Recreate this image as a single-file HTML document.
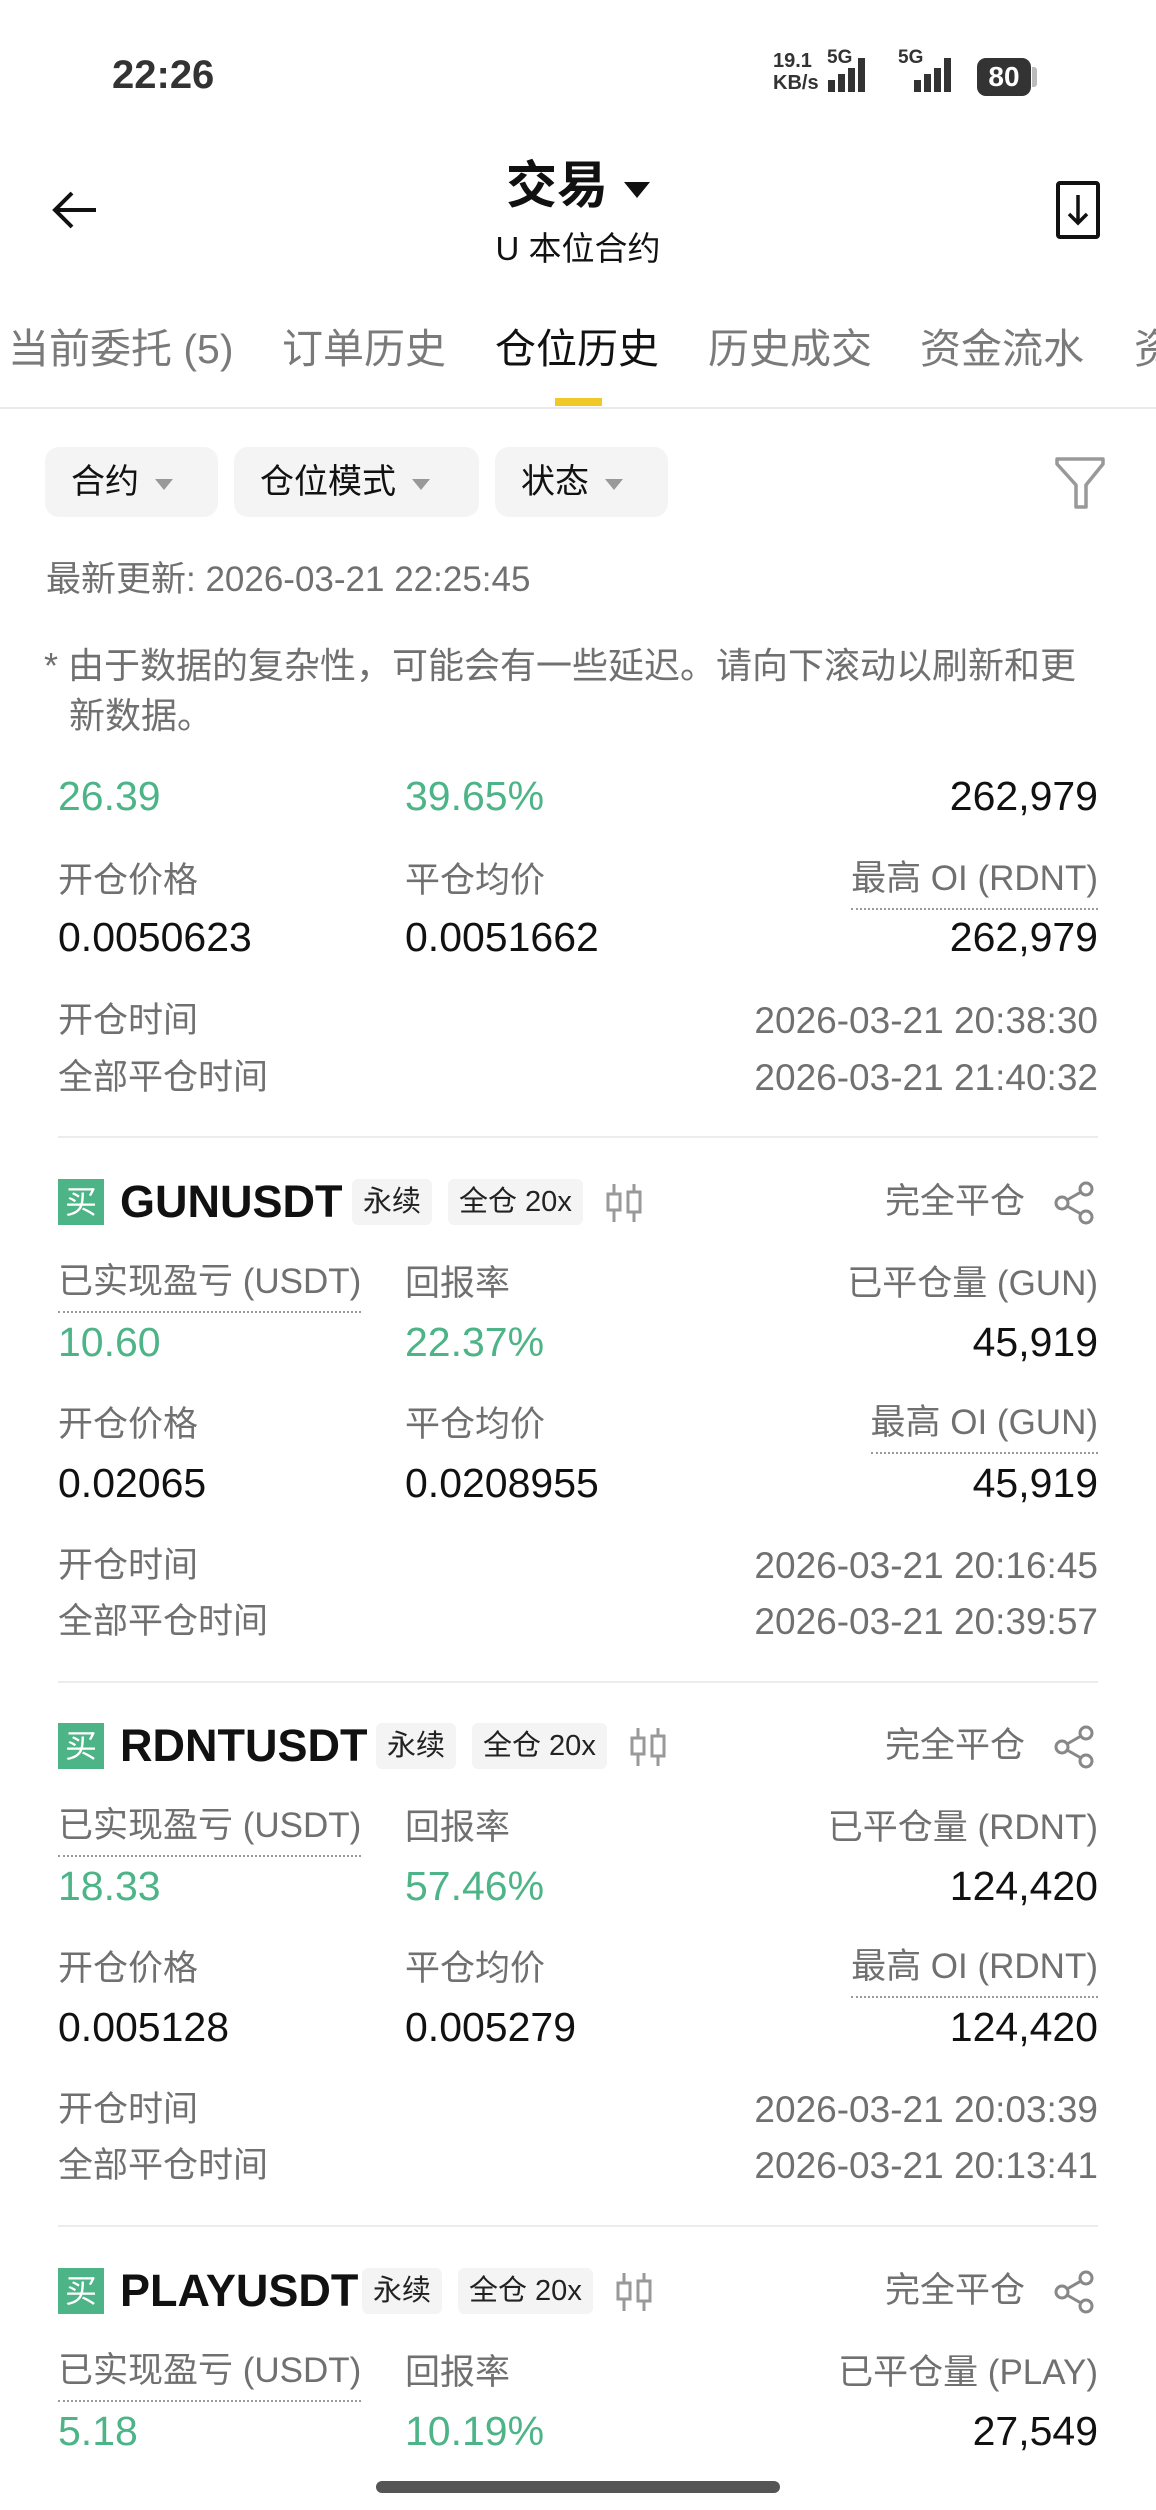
<!DOCTYPE html>
<html><head><meta charset="utf-8">
<style>
*{margin:0;padding:0;box-sizing:border-box}
body{width:1156px;height:2510px;background:#fff;position:relative;overflow:hidden;font-family:"Liberation Sans","Noto Sans CJK SC",sans-serif;color:#111}
.a{position:absolute;white-space:nowrap;line-height:50px;height:50px}
.lbl{font-size:35px;color:#707070}
.tm{font-size:37px;color:#707070}
.val{font-size:41px;color:#111}
.g{color:#4db487}
.r{right:58px;text-align:right}
.dot{border-bottom:2px dotted #9a9a9a;line-height:46px;height:54px}
.sep{position:absolute;left:58px;right:58px;height:2px;background:#ececec}
.tag{position:absolute;height:46px;line-height:46px;background:#f4f4f4;border-radius:6px;font-size:29px;color:#222;padding:0 11px}
.buy{position:absolute;width:46px;height:46px;background:#4db487;color:#fff;font-size:32px;line-height:46px;text-align:center}
.sym{position:absolute;font-size:45px;font-weight:bold;line-height:50px;color:#111}
.chip{position:absolute;top:447px;height:70px;background:#f4f4f4;border-radius:14px;font-size:34px;line-height:70px;padding-left:26px;color:#111}
.chip i{display:inline-block;width:0;height:0;border-left:9px solid transparent;border-right:9px solid transparent;border-top:11px solid #999;margin-left:16px;vertical-align:middle}
.tab{font-size:41px;color:#7a7a7a;top:323px;height:52px;line-height:52px}
</style></head><body>

<!-- status bar -->
<div class="a" style="left:112px;top:50px;font-size:40px;font-weight:bold;color:#333">22:26</div>
<div class="a" style="left:773px;top:50px;font-size:20px;font-weight:bold;line-height:22px;color:#333">19.1<br>KB/s</div>
<div class="a" style="left:827px;top:48px;font-size:19px;font-weight:bold;line-height:20px;color:#333">5G</div>
<svg style="position:absolute;left:826px;top:56px" width="62" height="40"><rect x="2" y="24" width="7" height="12" fill="#333"/><rect x="12" y="18" width="7" height="18" fill="#333"/><rect x="22" y="12" width="7" height="24" fill="#333"/><rect x="32" y="2" width="7" height="34" fill="#333"/></svg>
<div class="a" style="left:898px;top:48px;font-size:19px;font-weight:bold;line-height:20px;color:#333">5G</div>
<svg style="position:absolute;left:912px;top:56px" width="50" height="40"><rect x="2" y="24" width="7" height="12" fill="#333"/><rect x="12" y="18" width="7" height="18" fill="#333"/><rect x="22" y="12" width="7" height="24" fill="#333"/><rect x="32" y="2" width="7" height="34" fill="#333"/></svg>
<div style="position:absolute;left:977px;top:58px;width:54px;height:38px;background:#333;border-radius:9px;color:#fff;font-size:28px;font-weight:bold;text-align:center;line-height:38px">80</div>
<div style="position:absolute;left:1032px;top:67px;width:5px;height:20px;background:#bbb;border-radius:0 3px 3px 0"></div>

<!-- header -->
<svg style="position:absolute;left:50px;top:188px" width="50" height="44" viewBox="0 0 50 44"><path d="M46 22H6M22 5L5 22l17 17" fill="none" stroke="#111" stroke-width="4"/></svg>
<div class="a" style="left:0;width:1156px;text-align:center;top:154px;height:64px;line-height:64px;font-size:51px;font-weight:bold">交易<span style="display:inline-block;width:0;height:0;border-left:13px solid transparent;border-right:13px solid transparent;border-top:16px solid #111;margin-left:16px;vertical-align:middle"></span></div>
<div class="a" style="left:0;width:1156px;text-align:center;top:224px;font-size:33px;color:#111">U 本位合约</div>
<svg style="position:absolute;left:1055px;top:180px" width="50" height="62" viewBox="0 0 50 62"><rect x="3" y="3" width="40" height="54" rx="2" fill="none" stroke="#111" stroke-width="4"/><path d="M23 15v28M14 34l9 9 9-9" fill="none" stroke="#111" stroke-width="3.5"/></svg>

<!-- tabs -->
<div class="a tab" style="left:8px">当前委托 (5)</div>
<div class="a tab" style="left:282px">订单历史</div>
<div class="a tab" style="left:495px;color:#111">仓位历史</div>
<div class="a tab" style="left:708px">历史成交</div>
<div class="a tab" style="left:920px">资金流水</div>
<div class="a tab" style="left:1134px">资</div>
<div style="position:absolute;left:555px;top:398px;width:47px;height:8px;background:#f0c929"></div>
<div style="position:absolute;left:0;right:0;top:407px;height:2px;background:#eaeaea"></div>

<!-- chips -->
<div class="chip" style="left:45px;width:173px">合约<i></i></div>
<div class="chip" style="left:234px;width:245px">仓位模式<i></i></div>
<div class="chip" style="left:495px;width:173px">状态<i></i></div>
<svg style="position:absolute;left:1053px;top:455px" width="54" height="56" viewBox="0 0 54 56"><path d="M4 4h46v5L33 30v22h-10V30L4 9z" fill="none" stroke="#999" stroke-width="3.5" stroke-linejoin="round"/></svg>

<div class="a" style="left:46px;top:555px;font-size:35px;color:#707070">最新更新: 2026-03-21 22:25:45</div>
<div class="a" style="left:44px;top:641px;font-size:36px;color:#707070">* 由于数据的复杂性，可能会有一些延迟。请向下滚动以刷新和更</div>
<div class="a" style="left:69px;top:691px;font-size:36px;color:#707070">新数据。</div>

<!-- partial card -->
<div class="a val g" style="left:58px;top:771px">26.39</div>
<div class="a val g" style="left:405px;top:771px">39.65%</div>
<div class="a val r" style="top:771px">262,979</div>
<div class="a lbl" style="left:58px;top:856px">开仓价格</div>
<div class="a lbl" style="left:405px;top:856px">平仓均价</div>
<div class="a lbl r dot" style="top:856px">最高 OI (RDNT)</div>
<div class="a val" style="left:58px;top:912px">0.0050623</div>
<div class="a val" style="left:405px;top:912px">0.0051662</div>
<div class="a val r" style="top:912px">262,979</div>
<div class="a lbl" style="left:58px;top:996px">开仓时间</div>
<div class="a tm r" style="top:996px">2026-03-21 20:38:30</div>
<div class="a lbl" style="left:58px;top:1053px">全部平仓时间</div>
<div class="a tm r" style="top:1053px">2026-03-21 21:40:32</div>
<div class="sep" style="top:1136px"></div>

<!-- GUN card -->
<div class="buy" style="left:58px;top:1179px">买</div>
<div class="sym" style="left:120px;top:1177px">GUNUSDT</div>
<div class="tag" style="left:352px;top:1179px">永续</div>
<div class="tag" style="left:448px;top:1179px">全仓 20x</div>
<svg style="position:absolute;left:604px;top:1182px" width="40" height="42" viewBox="0 0 40 42"><path d="M10 2v38M30 2v38" stroke="#999" stroke-width="3"/><rect x="4" y="12" width="12" height="16" fill="#fff" stroke="#999" stroke-width="3"/><rect x="24" y="10" width="12" height="20" fill="#fff" stroke="#999" stroke-width="3"/></svg>
<div class="a lbl" style="left:885px;top:1177px">完全平仓</div>
<svg style="position:absolute;left:1053px;top:1181px" width="44" height="44" viewBox="0 0 44 44"><circle cx="33" cy="8" r="6" fill="none" stroke="#888" stroke-width="3"/><circle cx="9" cy="22" r="6" fill="none" stroke="#888" stroke-width="3"/><circle cx="33" cy="36" r="6" fill="none" stroke="#888" stroke-width="3"/><path d="M14 19l14-8M14 25l14 8" stroke="#888" stroke-width="3"/></svg>
<div class="a lbl dot" style="left:58px;top:1259px">已实现盈亏 (USDT)</div>
<div class="a lbl" style="left:405px;top:1259px">回报率</div>
<div class="a lbl r" style="top:1259px">已平仓量 (GUN)</div>
<div class="a val g" style="left:58px;top:1317px">10.60</div>
<div class="a val g" style="left:405px;top:1317px">22.37%</div>
<div class="a val r" style="top:1317px">45,919</div>
<div class="a lbl" style="left:58px;top:1400px">开仓价格</div>
<div class="a lbl" style="left:405px;top:1400px">平仓均价</div>
<div class="a lbl r dot" style="top:1400px">最高 OI (GUN)</div>
<div class="a val" style="left:58px;top:1458px">0.02065</div>
<div class="a val" style="left:405px;top:1458px">0.0208955</div>
<div class="a val r" style="top:1458px">45,919</div>
<div class="a lbl" style="left:58px;top:1541px">开仓时间</div>
<div class="a tm r" style="top:1541px">2026-03-21 20:16:45</div>
<div class="a lbl" style="left:58px;top:1597px">全部平仓时间</div>
<div class="a tm r" style="top:1597px">2026-03-21 20:39:57</div>
<div class="sep" style="top:1681px"></div>

<!-- RDNT card -->
<div class="buy" style="left:58px;top:1723px">买</div>
<div class="sym" style="left:120px;top:1721px">RDNTUSDT</div>
<div class="tag" style="left:376px;top:1723px">永续</div>
<div class="tag" style="left:472px;top:1723px">全仓 20x</div>
<svg style="position:absolute;left:628px;top:1726px" width="40" height="42" viewBox="0 0 40 42"><path d="M10 2v38M30 2v38" stroke="#999" stroke-width="3"/><rect x="4" y="12" width="12" height="16" fill="#fff" stroke="#999" stroke-width="3"/><rect x="24" y="10" width="12" height="20" fill="#fff" stroke="#999" stroke-width="3"/></svg>
<div class="a lbl" style="left:885px;top:1721px">完全平仓</div>
<svg style="position:absolute;left:1053px;top:1725px" width="44" height="44" viewBox="0 0 44 44"><circle cx="33" cy="8" r="6" fill="none" stroke="#888" stroke-width="3"/><circle cx="9" cy="22" r="6" fill="none" stroke="#888" stroke-width="3"/><circle cx="33" cy="36" r="6" fill="none" stroke="#888" stroke-width="3"/><path d="M14 19l14-8M14 25l14 8" stroke="#888" stroke-width="3"/></svg>
<div class="a lbl dot" style="left:58px;top:1803px">已实现盈亏 (USDT)</div>
<div class="a lbl" style="left:405px;top:1803px">回报率</div>
<div class="a lbl r" style="top:1803px">已平仓量 (RDNT)</div>
<div class="a val g" style="left:58px;top:1861px">18.33</div>
<div class="a val g" style="left:405px;top:1861px">57.46%</div>
<div class="a val r" style="top:1861px">124,420</div>
<div class="a lbl" style="left:58px;top:1944px">开仓价格</div>
<div class="a lbl" style="left:405px;top:1944px">平仓均价</div>
<div class="a lbl r dot" style="top:1944px">最高 OI (RDNT)</div>
<div class="a val" style="left:58px;top:2002px">0.005128</div>
<div class="a val" style="left:405px;top:2002px">0.005279</div>
<div class="a val r" style="top:2002px">124,420</div>
<div class="a lbl" style="left:58px;top:2085px">开仓时间</div>
<div class="a tm r" style="top:2085px">2026-03-21 20:03:39</div>
<div class="a lbl" style="left:58px;top:2141px">全部平仓时间</div>
<div class="a tm r" style="top:2141px">2026-03-21 20:13:41</div>
<div class="sep" style="top:2225px"></div>

<!-- PLAY card -->
<div class="buy" style="left:58px;top:2268px">买</div>
<div class="sym" style="left:120px;top:2266px">PLAYUSDT</div>
<div class="tag" style="left:362px;top:2268px">永续</div>
<div class="tag" style="left:458px;top:2268px">全仓 20x</div>
<svg style="position:absolute;left:614px;top:2271px" width="40" height="42" viewBox="0 0 40 42"><path d="M10 2v38M30 2v38" stroke="#999" stroke-width="3"/><rect x="4" y="12" width="12" height="16" fill="#fff" stroke="#999" stroke-width="3"/><rect x="24" y="10" width="12" height="20" fill="#fff" stroke="#999" stroke-width="3"/></svg>
<div class="a lbl" style="left:885px;top:2266px">完全平仓</div>
<svg style="position:absolute;left:1053px;top:2270px" width="44" height="44" viewBox="0 0 44 44"><circle cx="33" cy="8" r="6" fill="none" stroke="#888" stroke-width="3"/><circle cx="9" cy="22" r="6" fill="none" stroke="#888" stroke-width="3"/><circle cx="33" cy="36" r="6" fill="none" stroke="#888" stroke-width="3"/><path d="M14 19l14-8M14 25l14 8" stroke="#888" stroke-width="3"/></svg>
<div class="a lbl dot" style="left:58px;top:2348px">已实现盈亏 (USDT)</div>
<div class="a lbl" style="left:405px;top:2348px">回报率</div>
<div class="a lbl r" style="top:2348px">已平仓量 (PLAY)</div>
<div class="a val g" style="left:58px;top:2406px">5.18</div>
<div class="a val g" style="left:405px;top:2406px">10.19%</div>
<div class="a val r" style="top:2406px">27,549</div>

<div style="position:absolute;left:376px;top:2481px;width:404px;height:12px;border-radius:6px;background:#555"></div>
</body></html>
